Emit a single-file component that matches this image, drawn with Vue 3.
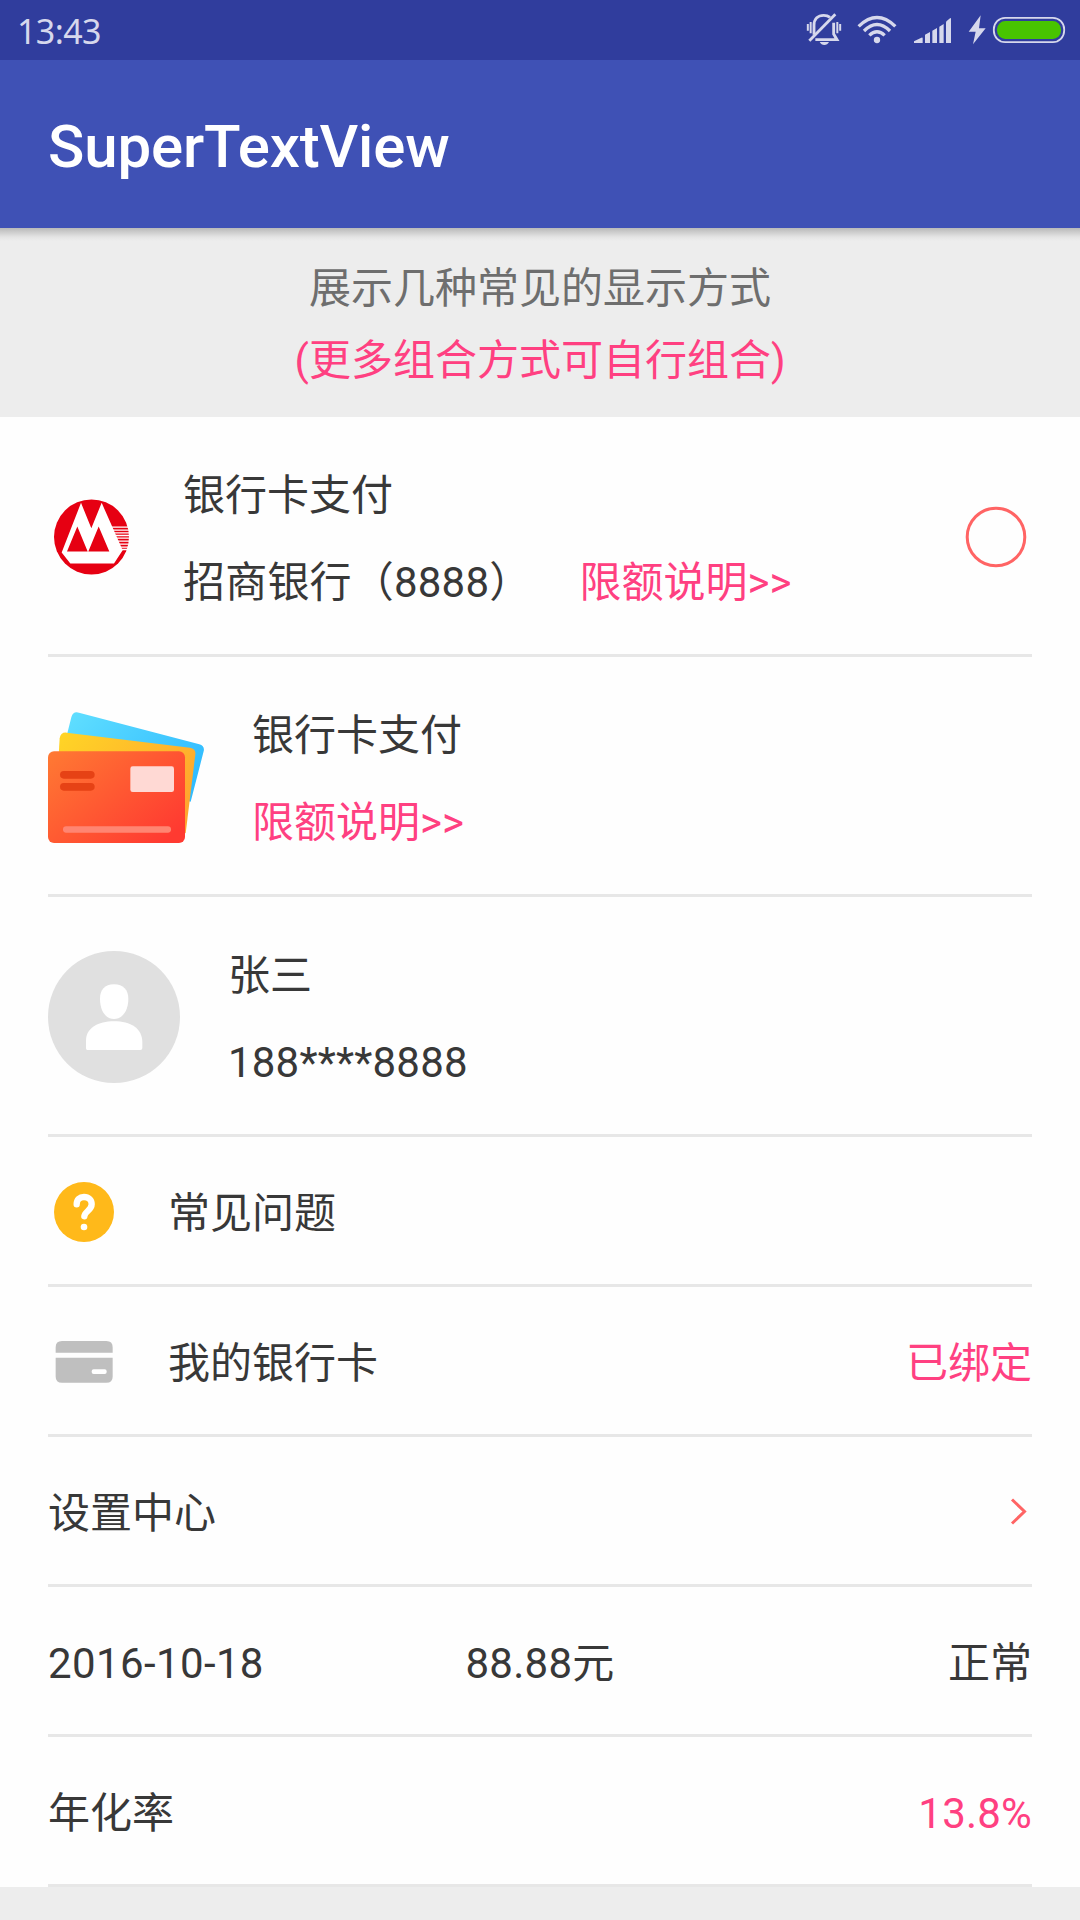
<script setup>
const rows = [
  {
    icon: 'bank',
    lines: [
      [{ text: '银行卡支付' }],
      [{ text: '招商银行（8888）', kind: 'mixed' }, { text: '限额说明>>', accent: true }],
    ],
    right: { icon: 'radio' },
  },
  {
    icon: 'cards',
    lines: [[{ text: '银行卡支付' }], [{ text: '限额说明>>', accent: true }]],
  },
  {
    icon: 'avatar',
    lines: [[{ text: '张三' }], [{ text: '188****8888', kind: 'mixed' }]],
  },
  { icon: 'help', lines: [[{ text: '常见问题' }]] },
  {
    icon: 'mycard',
    lines: [[{ text: '我的银行卡' }]],
    right: { text: '已绑定', accent: true },
  },
  { lines: [[{ text: '设置中心' }]], right: { icon: 'arrow' } },
  {
    lines: [[{ text: '2016-10-18', kind: 'num' }]],
    center: '88.88元',
    right: { text: '正常' },
  },
  { lines: [[{ text: '年化率' }]], right: { text: '13.8%', accent: true, kind: 'mixed' } },
]
</script>

<template>
  <div class="screen">
    <div class="status">
      <span class="clock">13:43</span>
      <div class="status-icons">
        <svg class="bell" width="36" height="60" viewBox="78 0 108 180" fill="none" stroke="#d6d8ec" stroke-width="6">
          <path d="M83.500 72v20M92 66v34M172 66v34M180.500 72v20" stroke-width="6" />
          <path d="M102 104V76c0-20 12-30 29-30 8 0 14 2 19 6M161 68v34l10 17H106" stroke-width="8.500" />
          <path d="M88 122L166 43" stroke-width="8.500" />
          <path d="M119 126h28c-3 6-8 9-14 9s-11-3-14-9z" fill="#d6d8ec" stroke="none" />
        </svg>
        <svg class="wifi" width="40" height="60" viewBox="231 0 120 180" fill="none" stroke="#d6d8ec" stroke-width="10">
          <path d="M236 79Q291 26 346 79" />
          <path d="M252 93Q291 54 330 93" />
          <path d="M268 106Q291 84 314 106" />
          <circle cx="291" cy="120" r="9.5" fill="#d6d8ec" stroke="none" />
        </svg>
        <svg class="signal" width="39" height="60" viewBox="399 0 117 180" fill="#d6d8ec">
          <path d="M402 129v-5l22-11q4-2 4 2v14zM435 129v-25l15-8v33zM457 129V92l14-8v45zM478 129V80l13-8v57zM498 129V68q0-4 3-6l9-7q3-2 3 2v72z" />
        </svg>
        <svg class="bolt" width="18" height="60" viewBox="564 0 54 180" fill="#d6d8ec">
          <path d="M602 46L566 95H587L579 133L617 85H597z" />
        </svg>
        <svg class="battery" width="74" height="60" viewBox="636 0 222 180">
          <rect x="641.5" y="53.500" width="211" height="73" rx="34" fill="none" stroke="#d6d8ec" stroke-width="5.500" />
          <rect x="651" y="63" width="192" height="54" rx="25" fill="#48c400" />
        </svg>
      </div>
    </div>

    <header class="appbar">SuperTextView</header>

    <div class="intro">
      <div>展示几种常见的显示方式</div>
      <div class="accent">(更多组合方式可自行组合)</div>
    </div>

    <main class="list">
      <div
        v-for="(row, i) in rows"
        :key="i"
        class="row"
        :class="{ tall: row.lines.length > 1 }"
      >
        <svg v-if="row.icon === 'bank'" class="icon" width="87" height="87" viewBox="24 130.500 261 261">
          <circle cx="154.500" cy="259.500" r="112.500" fill="#e60012" />
          <path d="M123 157L154 233L185 157L248 299L222 339H91L65 306z" fill="#fff" />
          <path d="M112 228L143 303H81zM176 228L208 303H145z" fill="#e60012" />
          <path d="M215 230H270M219 239H270M222 247H270M226 255H270M229 263H270M233 272H270M237 281H270M241 290H270M245 297H262" stroke="#fff" stroke-width="4" />
        </svg>

        <svg v-else-if="row.icon === 'cards'" class="icon" width="156" height="132" viewBox="24 63 468 396">
          <defs>
            <linearGradient id="blue" x1="0" y1="0" x2="1" y2="0.600">
              <stop offset="0" stop-color="#62e0ff" />
              <stop offset="1" stop-color="#31bcff" />
            </linearGradient>
            <linearGradient id="yellow" x1="0" y1="0" x2="1" y2="0.600">
              <stop offset="0" stop-color="#ffd626" />
              <stop offset="1" stop-color="#ffa52e" />
            </linearGradient>
            <linearGradient id="red" x1="0" y1="0" x2="1" y2="0.800">
              <stop offset="0" stop-color="#ff7a33" />
              <stop offset="1" stop-color="#ff3a31" />
            </linearGradient>
          </defs>
          <path d="M94 82Q99 63 117 68L478 163Q495 168 491 184L452 335L70 240Q60 220 82 130z" fill="url(#blue)" />
          <path d="M59 145Q62 126 80 128L450 173Q468 176 466 193L437 430L50 300z" fill="url(#yellow)" />
          <rect x="24" y="184" width="411" height="275" rx="18" fill="url(#red)" />
          <rect x="60" y="243" width="104" height="23" rx="11.500" fill="#e64215" />
          <rect x="60" y="279" width="104" height="23" rx="11.500" fill="#e64215" />
          <rect x="271" y="229" width="131" height="77" rx="7" fill="#ffd9d4" />
          <rect x="69" y="409" width="324" height="19" rx="9.500" fill="#ff8572" />
        </svg>

        <svg v-else-if="row.icon === 'avatar'" class="icon" width="132" height="132" viewBox="24 93 396 396">
          <circle cx="222" cy="291" r="198" fill="#e0e0e0" />
          <path d="M222 193C250 193 265 210 265 236C265 268 250 297 222 297C194 297 180 268 180 236C180 210 194 193 222 193z" fill="#fff" />
          <path d="M142 390Q138 390 138 384V362C138 324 174 304 222 304C272 304 307 324 307 368V384Q307 390 301 390z" fill="#fff" />
        </svg>

        <svg v-else-if="row.icon === 'help'" class="icon" width="72" height="72" viewBox="24 78 216 216">
          <circle cx="132" cy="186" r="90" fill="#ffb91a" />
          <path d="M110 163C110 148 119 141 132 141C146 141 155 150 155 163C155 181 134 184 133 199" fill="none" stroke="#fff" stroke-width="19" stroke-linecap="round" />
          <circle cx="132" cy="231" r="10" fill="#fff" />
        </svg>

        <svg v-else-if="row.icon === 'mycard'" class="icon" width="72" height="72" viewBox="24 528 216 216">
          <path d="M47 608V592Q47 573 66 573H199Q218 573 218 592V608zM47 623H218V680Q218 698 199 698H66Q47 698 47 680z" fill="#bfbfbf" />
          <rect x="155" y="658" width="45" height="14" rx="6" fill="#fff" />
        </svg>

        <div class="text">
          <div v-for="(line, j) in row.lines" :key="j" class="line">
            <span
              v-for="part in line"
              :key="part.text"
              :class="[part.kind, { accent: part.accent }]"
            >{{ part.text }}</span>
          </div>
        </div>

        <div v-if="row.center" class="center">{{ row.center }}</div>

        <template v-if="row.right">
          <svg v-if="row.right.icon === 'radio'" class="end" width="72" height="72" viewBox="0 0 72 72">
            <circle cx="36" cy="36" r="28.800" fill="none" stroke="#ff6464" stroke-width="3" />
          </svg>
          <svg v-else-if="row.right.icon === 'arrow'" class="end" width="24" height="30" viewBox="0 0 24 30">
            <path d="M4 2.500L16.500 14.500L4 26.500" fill="none" stroke="#ff6464" stroke-width="3" />
          </svg>
          <div v-else class="end label" :class="[row.right.kind, { accent: row.right.accent }]">{{ row.right.text }}</div>
        </template>
      </div>
    </main>
  </div>
</template>

<style>
body {
  margin: 0;
  background: #ededed;
}
</style>

<style scoped>
.screen {
  width: 1080px;
  height: 1920px;
  overflow: hidden;
  background: #ededed;
  color: #383838;
  font-family: Roboto, "Noto Sans CJK SC", sans-serif;
  font-size: 42px;
}
.status {
  display: flex;
  justify-content: space-between;
  height: 60px;
  padding: 0 14px 0 17px;
  background: #303d9d;
}
.clock {
  color: #d6d8ec;
  font-family: "Noto Sans", sans-serif;
  font-size: 34px;
  letter-spacing: -0.6px;
  line-height: 62px;
}
.status-icons {
  display: flex;
}
.wifi {
  margin-left: 15px;
}
.signal,
.bolt {
  margin-left: 16px;
}
.battery {
  margin-left: 6px;
}
.appbar {
  height: 168px;
  padding-left: 48px;
  background: #3f51b5;
  color: #fff;
  font-size: 60px;
  font-weight: 500;
  letter-spacing: -0.15px;
  line-height: 173px;
}
.intro {
  height: 189px;
  padding-top: 25px;
  box-sizing: border-box;
  background: linear-gradient(#b9b9b9, #cccccc 4px, #e4e4e4 9px, #ededed 13px);
  color: #6e6e6e;
  line-height: 72px;
  text-align: center;
}
.accent {
  color: #ff4081;
}
.num {
  letter-spacing: 0.38px;
}
.mixed {
  letter-spacing: 0.2px;
}
.list {
  padding: 0 48px;
  background: #fefefe;
}
.row {
  display: grid;
  grid-template-columns: auto auto 1fr;
  align-items: center;
  height: 150px;
  box-shadow: inset 0 -3px #e7e7e7;
}
.tall {
  height: 240px;
}
.row > * {
  grid-row: 1;
}
.icon {
  display: block;
  margin-right: 48px;
}
.text {
  grid-column: 2;
  padding-top: 2px;
}
.tall .text {
  padding-top: 4px;
}
.line {
  display: flex;
  gap: 48px;
  line-height: 87px;
  white-space: nowrap;
}
.center {
  grid-column: 1 / -1;
  justify-self: center;
  padding-top: 2px;
  letter-spacing: 0.25px;
  line-height: 87px;
}
.end {
  grid-column: 3;
  justify-self: end;
}
.label {
  padding-top: 2px;
  line-height: 87px;
}
</style>
